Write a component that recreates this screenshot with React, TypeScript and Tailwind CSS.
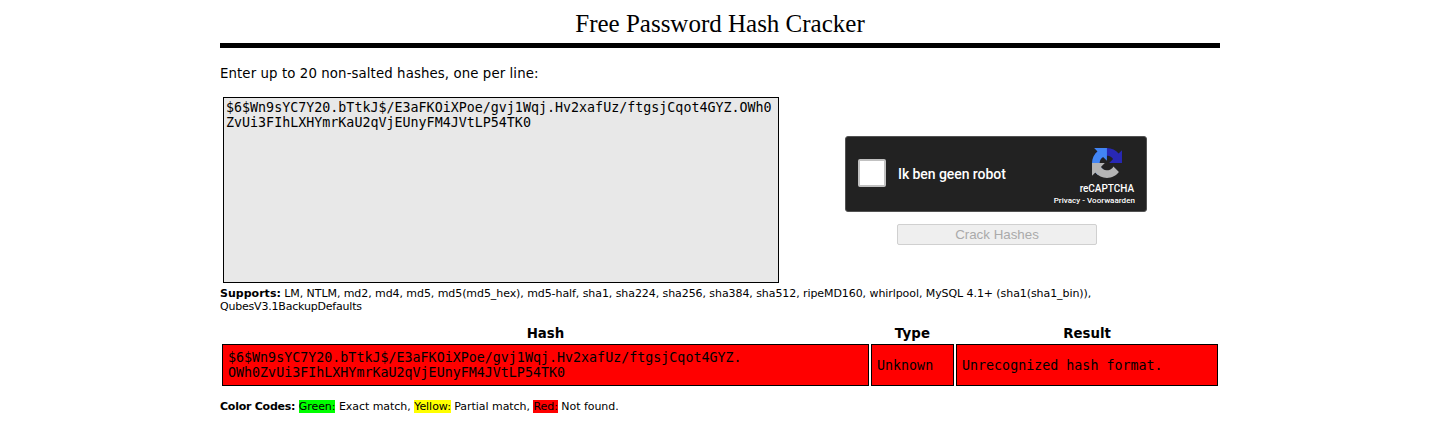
import React from 'react';

const sans = "font-['DejaVu_Sans',sans-serif]";
const mono = "font-['DejaVu_Sans_Mono',monospace]";

function RecaptchaLogo() {
  return (
    <svg viewBox="0 0 64 64" className="h-[30px] w-[30px]">
      <path
        fill="#2828b4"
        d="M64 31.955l-.033-1.37V4.687l-7.16 7.16C50.948 4.674 42.033.093 32.05.093c-10.4 0-19.622 4.96-25.458 12.64l11.736 11.86a15.55 15.55 0 0 1 4.754-5.334c2.05-1.6 4.952-2.906 8.968-2.906.485 0 .86.057 1.135.163 4.976.393 9.288 3.14 11.828 7.124l-8.307 8.307L64 31.953"
      />
      <path
        fill="#4285f4"
        d="M31.862.094l-1.37.033H4.594l7.16 7.16C4.58 13.147 0 22.06 0 32.046c0 10.4 4.96 19.622 12.64 25.458L24.5 45.768a15.55 15.55 0 0 1-5.334-4.754c-1.6-2.05-2.906-4.952-2.906-8.968 0-.485.057-.86.163-1.135.393-4.976 3.14-9.288 7.124-11.828l8.307 8.307L31.86.095"
      />
      <path
        fill="#b4b4b4"
        d="M.001 32.045l.033 1.37v25.898l7.16-7.16c5.86 7.173 14.774 11.754 24.76 11.754 10.4 0 19.622-4.96 25.458-12.64l-11.736-11.86a15.55 15.55 0 0 1-4.754 5.334c-2.05 1.6-4.952 2.906-8.968 2.906-.485 0-.86-.057-1.135-.163-4.976-.393-9.288-3.14-11.828-7.124l8.307-8.307c-10.522.04-22.4.066-27.295-.005"
      />
    </svg>
  );
}

function Recaptcha() {
  return (
    <div className="flex h-[76px] w-[302px] rounded-[3px] border border-[#525252] bg-[#222] font-['Roboto',sans-serif] font-medium text-white">
      <div className="mt-[22px] ml-3 h-7 w-7 rounded-[2px] border-2 border-[#c1c1c1] bg-white" />
      <div className="mt-[29px] ml-3 flex-1 text-[14px] leading-[17px] tracking-[-0.06px] whitespace-nowrap">
        Ik ben geen robot
      </div>
      <div className="mr-[11px] flex flex-col items-end pt-[11px]">
        <div className="mr-[13px]">
          <RecaptchaLogo />
        </div>
        <div className="mt-[5px] mr-px text-[10px] leading-[12px] tracking-[-0.03px]">reCAPTCHA</div>
        <div className="mt-[1px] text-[8px] leading-[10px] tracking-[0.04px] whitespace-nowrap">Privacy - Voorwaarden</div>
      </div>
    </div>
  );
}

export default function App() {
  return (
    <main className={`min-h-[426px] bg-white text-black ${sans}`}>
      <div className="mx-auto w-[1000px]">
        <h1 className="h-[48px] border-b-[5px] border-black pt-[9px] text-center font-['Liberation_Serif',serif] text-[25px] leading-[30px]">
          Free Password Hash Cracker
        </h1>
        <p className="mt-[18px] text-[13.333px] leading-[16px] tracking-[0.09px]">
          Enter up to 20 non-salted hashes, one per line:
        </p>

        <div className="mt-[15px] flex h-[186px] pl-[3px]">
          <textarea
            readOnly
            spellCheck={false}
            className={`h-[186px] w-[556px] resize-none border border-black bg-[#e8e8e8] p-[2px] text-[13.333px] leading-[15px] break-all outline-none ${mono}`}
            value="$6$Wn9sYC7Y20.bTtkJ$/E3aFKOiXPoe/gvj1Wqj.Hv2xafUz/ftgsjCqot4GYZ.OWh0ZvUi3FIhLXHYmrKaU2qVjEUnyFM4JVtLP54TK0"
          />
          <div className="ml-[66px] flex w-[302px] flex-col pt-[39px]">
            <Recaptcha />
            <button
              disabled
              className="mt-3 ml-[52px] h-[21px] w-[200px] rounded-[2px] border border-[#d0d0d0] bg-[#efefef] font-['Liberation_Sans',sans-serif] text-[13.333px] leading-[19px] text-[#aaa]"
            >
              Crack Hashes
            </button>
          </div>
        </div>

        <p className="mt-[4px] text-[11px] leading-[13px] tracking-[-0.075px] whitespace-nowrap">
          <b className="tracking-[0.02px]">Supports:</b> LM, NTLM, md2, md4, md5, md5(md5_hex), md5-half, sha1, sha224, sha256, sha384, sha512,
          ripeMD160, whirlpool, MySQL 4.1+ (sha1(sha1_bin)),
          <br />
          <span className="tracking-[-0.2px]">QubesV3.1BackupDefaults</span>
        </p>

        <div className="mt-[13px] grid grid-cols-[647px_83px_262px] gap-x-[2px] pl-[2px]">
          <div className="h-[18px] text-center text-[13.333px] leading-[16px] font-bold">Hash</div>
          <div className="text-center text-[13.333px] leading-[16px] font-bold tracking-[0.2px]">Type</div>
          <div className="text-center text-[13.333px] leading-[16px] font-bold">Result</div>
          <div className={`flex h-[42px] items-center border border-black bg-[#f00] px-[5px] text-[13.333px] leading-[15px] ${mono}`}>
            <span>
              $6$Wn9sYC7Y20.bTtkJ$/E3aFKOiXPoe/gvj1Wqj.Hv2xafUz/ftgsjCqot4GYZ.
              <br />
              OWh0ZvUi3FIhLXHYmrKaU2qVjEUnyFM4JVtLP54TK0
            </span>
          </div>
          <div className={`flex items-center border border-black bg-[#f00] px-[5px] text-[13.333px] leading-[15px] ${mono}`}>Unknown</div>
          <div className={`flex items-center border border-black bg-[#f00] px-[5px] text-[13.333px] leading-[15px] ${mono}`}>
            Unrecognized hash format.
          </div>
        </div>

        <p className="mt-[14px] text-[11px] leading-[13px] tracking-[-0.045px] whitespace-nowrap">
          <b className="tracking-[-0.24px]">Color Codes:</b> <span className="bg-[#0f0]">Green:</span> Exact match,{' '}
          <span className="bg-[#ff0]">Yellow:</span> Partial match, <span className="bg-[#f00]">Red:</span> Not found.
        </p>
      </div>
    </main>
  );
}
